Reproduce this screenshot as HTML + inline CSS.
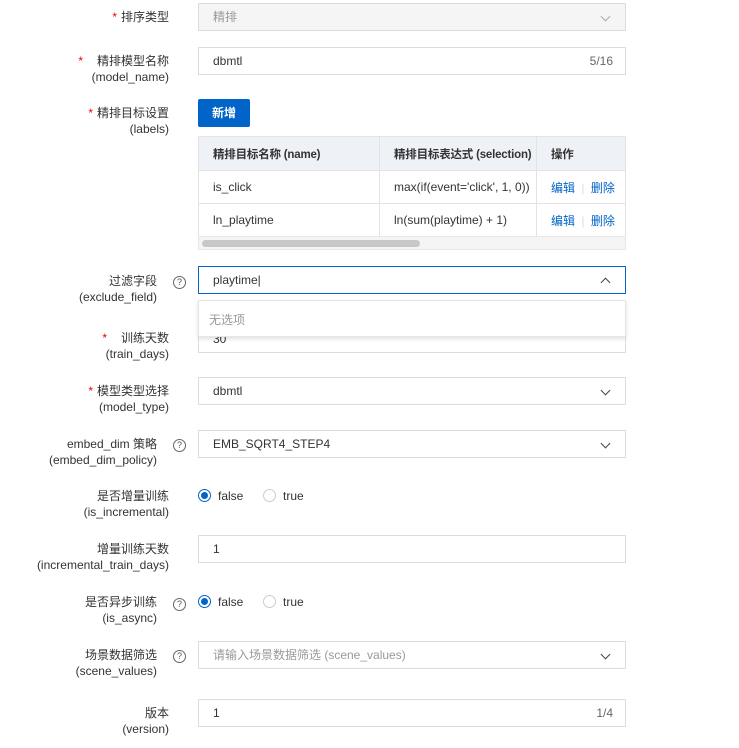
<!DOCTYPE html>
<html><head><meta charset="utf-8"><style>
*{box-sizing:border-box;margin:0;padding:0}
body{width:739px;height:748px;background:#fff;font-family:"Liberation Sans","Noto Sans CJK SC",sans-serif;font-size:12px;color:#333;position:relative;overflow:hidden}
.lab{position:absolute;right:570px;text-align:right;line-height:16px;color:#333;white-space:nowrap}
.lab.h{right:582px}
.req{color:#e00;margin-right:4px}
.help{position:absolute;width:13px;height:13px;border:1px solid #666;border-radius:50%;font-size:9px;line-height:11px;text-align:center;color:#555;left:173px}
.inp{position:absolute;left:198px;width:428px;height:28px;border:1px solid #dcdcdc;padding:0 14px;line-height:26px;color:#333;background:#fff}
.cnt{position:absolute;right:12px;top:0;color:#666}
.arr{position:absolute;right:16px;top:9px;width:7px;height:7px;border-right:1.2px solid #444;border-bottom:1.2px solid #444;transform:rotate(45deg)}
.up{top:12px;transform:rotate(-135deg)}
.btn{position:absolute;left:198px;top:99px;width:52px;height:28px;background:#0064c8;color:#fff;font-weight:bold;text-align:center;line-height:28px;border-radius:2px}
table{position:absolute;left:198px;top:136px;width:428px;border-collapse:collapse;table-layout:fixed}
td,th{border:1px solid #e3e3e3;height:33px;padding:0 14px;text-align:left;font-weight:normal;white-space:nowrap;overflow:hidden}
th{background:#eef1f6;font-weight:bold;height:34px;font-size:11.5px;letter-spacing:-0.2px}
a{color:#0064c8;text-decoration:none}
.sb{position:absolute;left:198px;top:236px;width:428px;height:14px;background:#f5f5f5;border:1px solid #e8e8e8}
.sb div{position:absolute;left:3px;top:3px;width:218px;height:7px;background:#c8c8c8;border-radius:4px}
.radio{position:absolute;width:13px;height:13px;border:1px solid #ccc;border-radius:50%}
.radio.on{border-color:#0064c8}
.radio.on:after{content:"";position:absolute;left:2px;top:2px;width:7px;height:7px;border-radius:50%;background:#0064c8}
.rt{position:absolute}
</style></head><body>

<div class="lab" style="top:9px"><span class="req">*</span>排序类型</div>
<div class="inp" style="top:3px;background:#f5f5f5;color:#999">精排<span class="arr" style="border-color:#aaa"></span></div>

<div class="lab" style="top:53px"><span class="req" style="margin-right:14px">*</span>精排模型名称<br>(model_name)</div>
<div class="inp" style="top:47px">dbmtl<span class="cnt">5/16</span></div>

<div class="lab" style="top:105px"><span class="req">*</span>精排目标设置<br>(labels)</div>
<div class="btn">新增</div>
<table>
<colgroup><col style="width:181px"><col style="width:157px"><col style="width:89px"></colgroup>
<tr><th>精排目标名称 (name)</th><th>精排目标表达式 (selection)</th><th>操作</th></tr>
<tr><td>is_click</td><td>max(if(event='click', 1, 0))</td><td><a>编辑</a> <span style="color:#ddd;margin:0 3px">|</span> <a>删除</a></td></tr>
<tr><td>ln_playtime</td><td>ln(sum(playtime) + 1)</td><td><a>编辑</a> <span style="color:#ddd;margin:0 3px">|</span> <a>删除</a></td></tr>
</table>
<div class="sb"><div></div></div>

<div class="lab h" style="top:273px">过滤字段<br>(exclude_field)</div><div class="help" style="top:276px">?</div>

<div class="lab" style="top:330px"><span class="req" style="margin-right:14px">*</span>训练天数<br>(train_days)</div>
<div class="inp" style="top:325px">30</div>

<div class="inp" style="top:266px;border-color:#0064c8">playtime|<span class="arr up"></span></div>
<div style="position:absolute;left:198px;top:300px;width:428px;height:37px;background:#fff;border:1px solid #e6e6e6;box-shadow:0 2px 4px rgba(0,0,0,.12);color:#999;padding:10px 10px">无选项</div>

<div class="lab" style="top:383px"><span class="req">*</span>模型类型选择<br>(model_type)</div>
<div class="inp" style="top:377px">dbmtl<span class="arr"></span></div>

<div class="lab h" style="top:436px">embed_dim 策略<br>(embed_dim_policy)</div><div class="help" style="top:439px">?</div>
<div class="inp" style="top:430px">EMB_SQRT4_STEP4<span class="arr"></span></div>

<div class="lab" style="top:488px">是否增量训练<br>(is_incremental)</div>
<div class="radio on" style="left:198px;top:489px"></div><div class="rt" style="left:218px;top:489px">false</div>
<div class="radio" style="left:263px;top:489px"></div><div class="rt" style="left:283px;top:489px">true</div>

<div class="lab" style="top:541px">增量训练天数<br>(incremental_train_days)</div>
<div class="inp" style="top:535px">1</div>

<div class="lab h" style="top:594px">是否异步训练<br>(is_async)</div><div class="help" style="top:598px">?</div>
<div class="radio on" style="left:198px;top:595px"></div><div class="rt" style="left:218px;top:595px">false</div>
<div class="radio" style="left:263px;top:595px"></div><div class="rt" style="left:283px;top:595px">true</div>

<div class="lab h" style="top:647px">场景数据筛选<br>(scene_values)</div><div class="help" style="top:650px">?</div>
<div class="inp" style="top:641px;color:#999">请输入场景数据筛选 (scene_values)<span class="arr"></span></div>

<div class="lab" style="top:705px">版本<br>(version)</div>
<div class="inp" style="top:699px">1<span class="cnt">1/4</span></div>
</body></html>
